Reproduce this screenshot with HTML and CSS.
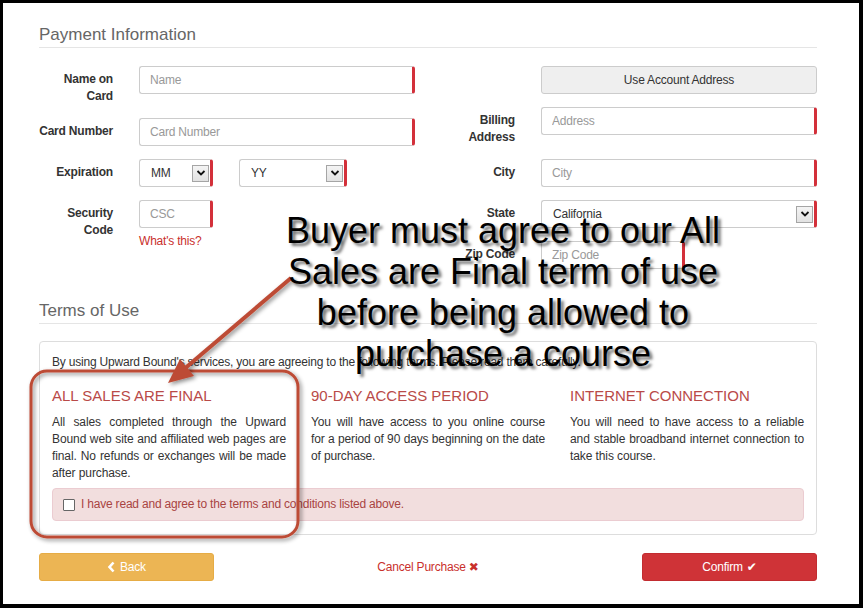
FILE: index.html
```html
<!DOCTYPE html>
<html lang="en">
<head>
    <meta charset="UTF-8">
    <title>Payment Information</title>
    <link rel="stylesheet" href="styles.css">
</head>
<body>
    <div class="frame">
        <div class="page">
            <h2 class="section-title">Payment Information</h2>

            <!-- Payment form -->
            <div class="form-grid">
                <div class="form-col">
                    <div class="group">
                        <label>Name on<br>Card</label>
                        <div class="control"><input class="field req" placeholder="Name"></div>
                    </div>
                    <div class="group">
                        <label>Card Number</label>
                        <div class="control"><input class="field req" placeholder="Card Number"></div>
                    </div>
                    <div class="group">
                        <label>Expiration</label>
                        <div class="control split">
                            <div class="select req mm"><span>MM</span><i class="arrow"><svg width="12" height="12" viewBox="0 0 12 12"><polyline points="2.5,4 6,7.5 9.5,4" fill="none" stroke="#111" stroke-width="1.8"/></svg></i></div>
                            <div class="select req yy"><span>YY</span><i class="arrow"><svg width="12" height="12" viewBox="0 0 12 12"><polyline points="2.5,4 6,7.5 9.5,4" fill="none" stroke="#111" stroke-width="1.8"/></svg></i></div>
                        </div>
                    </div>
                    <div class="group">
                        <label>Security<br>Code</label>
                        <div class="control">
                            <input class="field req short" placeholder="CSC">
                            <a class="help-link">What's this?</a>
                        </div>
                    </div>
                </div>

                <div class="form-col">
                    <div class="group">
                        <label></label>
                        <div class="control"><button class="btn-default">Use Account Address</button></div>
                    </div>
                    <div class="group">
                        <label>Billing<br>Address</label>
                        <div class="control"><input class="field req" placeholder="Address"></div>
                    </div>
                    <div class="group">
                        <label>City</label>
                        <div class="control"><input class="field req" placeholder="City"></div>
                    </div>
                    <div class="group">
                        <label>State</label>
                        <div class="control">
                            <div class="select req"><span>California</span><i class="arrow"><svg width="12" height="12" viewBox="0 0 12 12"><polyline points="2.5,4 6,7.5 9.5,4" fill="none" stroke="#111" stroke-width="1.8"/></svg></i></div>
                        </div>
                    </div>
                    <div class="group">
                        <label>Zip Code</label>
                        <div class="control"><input class="field req zip" placeholder="Zip Code"></div>
                    </div>
                </div>
            </div>

            <h2 class="section-title terms-title">Terms of Use</h2>

            <!-- Terms panel -->
            <div class="terms-panel">
                <p class="intro">By using Upward Bound's services, you are agreeing to the following terms. Please read them carefully.</p>
                <div class="terms-cols">
                    <div class="term">
                        <h3>ALL SALES ARE FINAL</h3>
                        <p>All sales completed through the Upward Bound web site and affiliated web pages are final. No refunds or exchanges will be made after purchase.</p>
                    </div>
                    <div class="term access">
                        <h3>90-DAY ACCESS PERIOD</h3>
                        <p>You will have access to you online course for&nbsp;a period of 90 days beginning on the date of purchase.</p>
                    </div>
                    <div class="term">
                        <h3>INTERNET CONNECTION</h3>
                        <p>You will need to have access to a reliable and stable broadband internet connection to take this course.</p>
                    </div>
                </div>
                <div class="agree">
                    <span class="checkbox"></span>
                    <span>I have read and agree to the terms and conditions listed above.</span>
                </div>
            </div>

            <div class="actions">
                <button class="btn btn-back"><svg width="9" height="12" viewBox="0 0 9 12"><polyline points="6.5,1.5 2.5,6 6.5,10.5" fill="none" stroke="#fff" stroke-width="2.6"/></svg> Back</button>
                <a class="cancel">Cancel Purchase <span class="x">&#10006;</span></a>
                <button class="btn btn-confirm">Confirm <span class="tick">&#10004;</span></button>
            </div>
        </div>

        <!-- Callout drawn over the page -->
        <svg class="callout" width="856" height="601" viewBox="3 3 856 601">
            <defs>
                <filter id="shade" x="-20%" y="-20%" width="140%" height="140%">
                    <feDropShadow dx="2" dy="2" stdDeviation="2" flood-color="#000" flood-opacity="0.45"/>
                </filter>
            </defs>
            <rect x="31" y="371" width="267" height="166" rx="16" fill="none" stroke="#bd4b36" stroke-width="3" filter="url(#shade)"/>
            <g filter="url(#shade)">
                <line x1="291" y1="278" x2="183" y2="370" stroke="#bd4b36" stroke-width="4"/>
                <polygon points="168,383 194,376 180,359" fill="#bd4b36"/>
            </g>
        </svg>
        <div class="callout-text">Buyer must agree to our All<br>Sales are Final term of use<br>before being allowed to<br>purchase a course</div>
    </div>
</body>
</html>
```

FILE: styles.css
```css
:root {
    --text: #333;
    --muted: #999;
    --line: #e5e5e5;
    --required: #d3303a;
    --danger-text: #a94442;
    --term-head: #b94a48;
}

body {
    margin: 0;
    background: #000;
    font-family: "Liberation Sans", Arial, sans-serif;
    font-size: 12px;
    letter-spacing: -0.2px;
    color: var(--text);
}

.frame {
    position: relative;
    width: 856px;
    height: 601px;
    margin: 3px 0 0 3px;
    background: #fff;
}

.page {
    padding: 22px 42px 0 36px;
}

/* Section headings */
.section-title {
    margin: 0 0 18px;
    padding-bottom: 2px;
    font-size: 17px;
    font-weight: normal;
    line-height: 20px;
    letter-spacing: 0;
    color: #666;
    border-bottom: 1px solid var(--line);
}

.terms-title {
    margin-top: 19px;
    margin-bottom: 17px;
}

/* Form */
.form-grid {
    display: grid;
    grid-template-columns: 380px 380px;
    column-gap: 22px;
    margin-left: -4px;
}

.group {
    display: grid;
    grid-template-columns: 78px 276px;
    column-gap: 26px;
    margin-bottom: 13px;
}

.group label {
    padding-top: 5px;
    text-align: right;
    font-weight: bold;
    line-height: 17px;
    white-space: nowrap;
}

.control {
    display: flex;
    flex-direction: column;
    align-items: flex-start;
}

.control.split {
    flex-direction: row;
    gap: 26px;
}

.field {
    box-sizing: border-box;
    width: 100%;
    height: 28px;
    padding: 0 10px;
    border: 1px solid #ccc;
    border-radius: 3px;
    font-family: inherit;
    font-size: 12px;
    letter-spacing: -0.2px;
    color: var(--text);
    outline: none;
}

.field::placeholder {
    color: var(--muted);
}

.req {
    border-right: 3px solid var(--required);
}

.field.short {
    width: 74px;
}

.field.zip {
    width: 144px;
}

.help-link {
    margin-top: 5px;
    line-height: 17px;
    color: #c9302c;
}

.select {
    box-sizing: border-box;
    display: flex;
    align-items: center;
    width: 100%;
    height: 28px;
    padding: 0 1px 0 11px;
    border: 1px solid #ccc;
    border-right: 3px solid var(--required);
    border-radius: 3px;
}

.select.mm {
    width: 74px;
}

.select.yy {
    width: 108px;
}

.arrow {
    box-sizing: border-box;
    display: flex;
    align-items: center;
    justify-content: center;
    width: 17px;
    height: 17px;
    margin-left: auto;
    border: 1px solid #a5a5a5;
    background: linear-gradient(#f4f4f4, #e2e2e2);
}

.btn-default {
    box-sizing: border-box;
    width: 100%;
    height: 28px;
    border: 1px solid #ccc;
    border-radius: 3px;
    background: #efefef;
    font-family: inherit;
    font-size: 12px;
    letter-spacing: -0.2px;
    color: var(--text);
}

/* Terms panel */
.terms-panel {
    padding: 12px 12px 13px;
    border: 1px solid #ddd;
    border-radius: 4px;
}

.intro {
    margin: 0 0 15px;
    line-height: 17px;
}

.terms-cols {
    display: grid;
    grid-template-columns: repeat(3, 1fr);
    column-gap: 25px;
}

.term h3 {
    margin: 0 0 8px;
    font-size: 15px;
    font-weight: normal;
    line-height: 20px;
    letter-spacing: 0;
    color: var(--term-head);
}

.term p {
    margin: 0;
    line-height: 17px;
    letter-spacing: -0.1px;
    text-align: justify;
}

.term.access p {
    letter-spacing: -0.15px;
}

.agree {
    display: flex;
    align-items: center;
    gap: 6px;
    margin-top: 6px;
    padding: 7px 10px;
    border: 1px solid #ebccd1;
    border-radius: 4px;
    background: #f2dede;
    line-height: 17px;
    color: var(--danger-text);
}

.checkbox {
    box-sizing: border-box;
    width: 12px;
    height: 12px;
    border: 1px solid #666;
    border-radius: 1px;
    background: #fff;
}

/* Bottom buttons */
.actions {
    display: flex;
    justify-content: space-between;
    align-items: center;
    margin-top: 18px;
}

.btn {
    display: flex;
    align-items: center;
    justify-content: center;
    gap: 4px;
    width: 175px;
    height: 28px;
    border-radius: 3px;
    font-family: inherit;
    font-size: 12px;
    letter-spacing: -0.2px;
    color: #fff;
}

.btn-back {
    border: 1px solid #e6ac45;
    background: #ecb554;
}

.btn-confirm {
    border: 1px solid #c22c30;
    background: #cf3337;
}

.cancel {
    color: #c9302c;
}

.x, .tick {
    font-family: "DejaVu Sans", sans-serif;
    font-size: 12px;
}

/* Annotation callout */
.callout {
    position: absolute;
    top: 0;
    left: 0;
}

.callout-text {
    position: absolute;
    top: 207px;
    left: 200px;
    width: 600px;
    text-align: center;
    font-size: 36px;
    line-height: 41px;
    letter-spacing: 0;
    color: #000;
    text-shadow: 3px 3px 3px rgba(0, 0, 0, 0.55);
}
```
